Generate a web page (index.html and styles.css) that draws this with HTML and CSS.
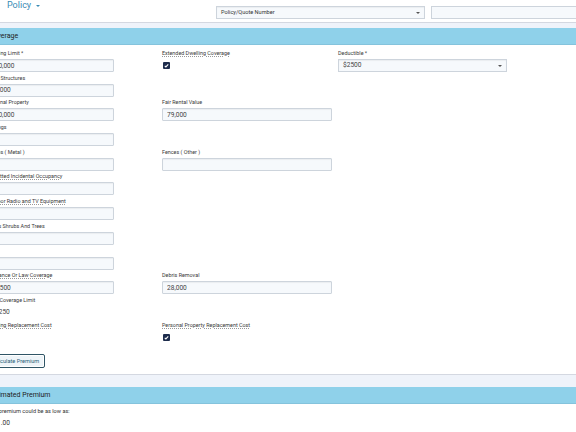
FILE: index.html
```html
<!DOCTYPE html>
<html lang="en">
<head>
    <meta charset="UTF-8">
    <meta name="viewport" content="width=device-width, initial-scale=1.0">
    <title>Policy Coverage</title>
    <link rel="stylesheet" href="styles.css">
</head>
<body>

<div class="page">
    <!-- Top bar -->
    <div class="topbar">
        <div class="title">Policy <span class="title-caret"></span></div>
        <div class="select top-select">Policy/Quote Number<span class="caret"></span></div>
        <input type="text" class="top-input">
    </div>

    <!-- Coverage -->
    <div class="band"></div>
    <div class="section-head">Coverage</div>

    <div class="form">
        <div class="row">
            <div class="field"><label>Dwelling Limit *</label><input class="box short" value="250,000"></div>
            <div class="field"><label class="tip">Extended Dwelling Coverage</label><span class="check"><svg viewBox="0 0 8 8"><path d="M2 4.3l1.3 1.3L6 2.6" fill="none" stroke="#fff" stroke-width="1.2"/></svg></span></div>
            <div class="field"><label>Deductible *</label><div class="select deductible">$2500<span class="caret"></span></div></div>
        </div>
        <div class="row">
            <div class="field"><label>Other Structures</label><input class="box short" value="25,000"></div>
        </div>
        <div class="row">
            <div class="field"><label>Personal Property</label><input class="box short" value="100,000"></div>
            <div class="field"><label>Fair Rental Value</label><input class="box" value="79,000"></div>
        </div>
        <div class="row">
            <div class="field"><label>Awnings</label><input class="box short" value=""></div>
        </div>
        <div class="row">
            <div class="field"><label>Fences ( Metal )</label><input class="box short" value=""></div>
            <div class="field"><label>Fences ( Other )</label><input class="box" value=""></div>
        </div>
        <div class="row">
            <div class="field"><label class="tip">Permitted Incidental Occupancy</label><input class="box short" value=""></div>
        </div>
        <div class="row">
            <div class="field"><label class="tip">Outdoor Radio and TV Equipment</label><input class="box short" value=""></div>
        </div>
        <div class="row">
            <div class="field"><label>Plants Shrubs And Trees</label><input class="box short" value=""></div>
        </div>
        <div class="row">
            <div class="field"><label>Pool</label><input class="box short" value=""></div>
        </div>
        <div class="row">
            <div class="field"><label class="tip">Ordinance Or Law Coverage</label><input class="box short" value="62,500"></div>
            <div class="field"><label>Debris Removal</label><input class="box" value="28,000"></div>
        </div>
        <div class="row">
            <div class="field"><label>Mold Coverage Limit</label><div class="value">$1,250</div></div>
        </div>
        <div class="row">
            <div class="field"><label class="tip">Dwelling Replacement Cost</label></div>
            <div class="field"><label class="tip">Personal Property Replacement Cost</label><span class="check"><svg viewBox="0 0 8 8"><path d="M2 4.3l1.3 1.3L6 2.6" fill="none" stroke="#fff" stroke-width="1.2"/></svg></span></div>
        </div>

        <button class="calc-button">Calculate Premium</button>
    </div>

    <!-- Estimated premium -->
    <div class="band tall"></div>
    <div class="section-head">Estimated Premium</div>
    <div class="premium">
        <p>Your premium could be as low as:</p>
        <p class="amount">$441.00</p>
    </div>
</div>

</body>
</html>
```

FILE: styles.css
```css
body {
    margin: 0;
    padding: 0;
    background-color: #fff;
    color: #333;
    font-family: Roboto, "Liberation Sans", sans-serif;
    overflow: hidden;
}
.page {
    margin-left: -14px;
    width: 620px;
}
.topbar {
    display: flex;
    align-items: flex-start;
    height: 22px;
}
.title {
    width: 209px;
    padding-left: 21px;
    font-size: 9px;
    line-height: 10px;
    color: #3a8bb4;
}
.title-caret {
    display: inline-block;
    margin-left: 3px;
    vertical-align: 1px;
    border-left: 2px solid transparent;
    border-right: 2px solid transparent;
    border-top: 2px solid #3a8bb4;
}
.select {
    position: relative;
    box-sizing: border-box;
    height: 13px;
    padding: 0 4px;
    font-size: 5.6px;
    line-height: 11px;
    background-color: #f6f9fc;
    border: 1px solid #cdd4dc;
    box-shadow: inset 0 1px 1px rgba(0, 0, 0, 0.05);
}
.top-select {
    width: 209px;
    margin-top: 6px;
    color: #333;
}
.caret {
    position: absolute;
    right: 4px;
    top: 5px;
    border-left: 2px solid transparent;
    border-right: 2px solid transparent;
    border-top: 2px solid #555;
}
.top-input {
    box-sizing: border-box;
    width: 170px;
    height: 13px;
    margin: 6px 0 0 6px;
    background-color: #f6f9fc;
    border: 1px solid #cdd4dc;
}
.band {
    height: 5px;
    background-color: #eff3fa;
    border-top: 1px solid #d4d8e1;
}
.band.tall {
    height: 12px;
}
.section-head {
    height: 16px;
    padding-left: 3px;
    font-size: 7px;
    line-height: 16px;
    color: #222;
    background-color: #8fd1ea;
    border-bottom: 1px solid #84c3dc;
}
.form {
    padding: 4px 0 6px;
}
.row {
    display: grid;
    grid-template-columns: 176px 176px 176px;
    height: 23px;
    margin-bottom: 1.7px;
}
.field label {
    display: block;
    height: 8px;
    margin-bottom: 2px;
    font-size: 5.4px;
    line-height: 8px;
    color: #3a3a3a;
    white-space: nowrap;
}
.field label.tip {
    text-decoration: underline dotted #999;
    text-underline-offset: 1px;
}
.box {
    display: block;
    box-sizing: border-box;
    width: 170px;
    height: 13px;
    padding: 0 4px;
    margin: 0;
    font-family: Roboto, "Liberation Sans", sans-serif;
    font-size: 6.6px;
    color: #444;
    background-color: #f6f9fc;
    border: 1px solid #cdd4dc;
    border-radius: 1px;
    box-shadow: inset 0 1px 1px rgba(0, 0, 0, 0.05);
}
.box.short {
    width: 128px;
}
.deductible {
    width: 169px;
    font-size: 6.6px;
    color: #444;
}
.value {
    padding: 2px 0 0 4px;
    font-size: 6.6px;
    line-height: 8px;
    color: #444;
}
.check {
    display: block;
    width: 7px;
    height: 7px;
    margin: 5px 0 0 1px;
    background-color: #1d2c4c;
    border-radius: 1px;
}
.check svg {
    display: block;
    width: 7px;
    height: 7px;
}
.calc-button {
    display: block;
    height: 14px;
    margin-top: 10px;
    padding: 0 5px;
    font-family: Roboto, "Liberation Sans", sans-serif;
    font-size: 5.6px;
    color: #2b5f78;
    background-color: #eef4f8;
    border: 1px solid #2f5566;
    border-radius: 2px;
    box-shadow: inset 0 0 0 1px #fff;
}
.premium {
    padding-top: 3px;
}
.premium p {
    margin: 0 0 4px;
    font-size: 5.6px;
    line-height: 8px;
}
.premium .amount {
    font-size: 6.6px;
}
```
